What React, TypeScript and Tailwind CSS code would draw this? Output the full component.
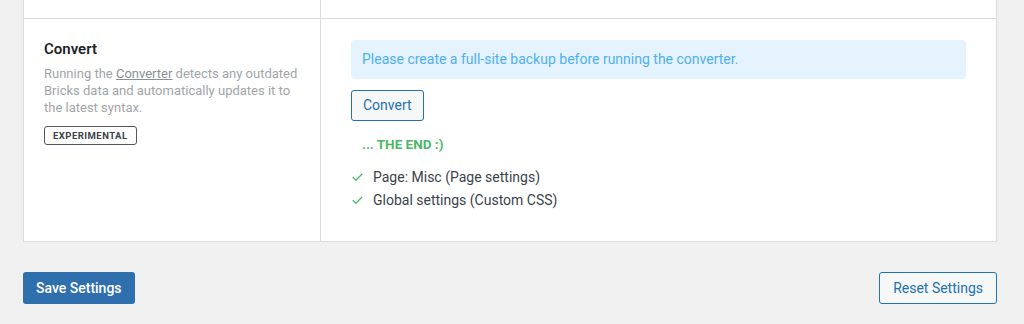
import { Check } from "lucide-react";

const font = { fontFamily: "Roboto, 'Noto Sans', sans-serif" };

export default function App() {
    return (
        <div className="w-[1024px] h-[324px] bg-[#f0f0f1] overflow-hidden pl-[23px] pr-[27px]" style={font}>
            <div className="bg-white border-x border-b border-[#dcdcde]">
                {/* previous row, cut off at the top */}
                <div className="flex h-[19px] border-b border-[#dcdcde]">
                    <div className="w-[297px] border-r border-[#dcdcde]" />
                    <div className="flex-1" />
                </div>

                <div className="flex h-[222px]">
                    <div className="w-[297px] shrink-0 border-r border-[#dcdcde] pl-[20px] pr-[12px] pt-[20px]">
                        <h3 className="text-[15px] leading-[20px] font-semibold text-[#1d2327]">Convert</h3>
                        <p className="mt-[6px] text-[13px] leading-[17px] text-[#a2a5a8]">
                            Running the <span className="underline text-[#8c8f94]">Converter</span> detects any outdated Bricks data and automatically updates it to the latest syntax.
                        </p>
                        <span className="inline-block mt-[10px] px-[8px] h-[19px] leading-[17px] border border-[#50575e] rounded-[3px] text-[9.5px] font-bold tracking-[0.05em] text-[#3c434a]">
                            EXPERIMENTAL
                        </span>
                    </div>

                    <div className="flex-1 pl-[30px] pr-[30px] pt-[21px]">
                        <div className="h-[39px] flex items-center px-[11px] rounded-[4px] bg-[#e5f3ff] text-[14px] text-[#4fb0ef]">
                            Please create a full-site backup before running the converter.
                        </div>
                        <button className="mt-[11px] h-[31px] px-[11px] rounded-[3px] border border-[#2271b1] bg-[#f6f7f7] text-[14px] text-[#2271b1]">
                            Convert
                        </button>
                        <div className="mt-[13px] pl-[11px] text-[13.5px] leading-[20px] font-bold text-[#4ab866]">
                            ... THE END :)
                        </div>
                        <ul className="mt-[13px] flex flex-col gap-[3px] text-[14px] leading-[20px] text-[#3c434a]">
                            <li className="flex items-center gap-[9px]">
                                <Check className="w-[13px] h-[13px] text-[#4ab866]" strokeWidth={2.25} />
                                Page: Misc (Page settings)
                            </li>
                            <li className="flex items-center gap-[9px]">
                                <Check className="w-[13px] h-[13px] text-[#4ab866]" strokeWidth={2.25} />
                                Global settings (Custom CSS)
                            </li>
                        </ul>
                    </div>
                </div>
            </div>

            <div className="flex justify-between mt-[30px]">
                <button className="h-[32px] px-[13px] rounded-[3px] bg-[#2f6fae] text-white text-[14px] font-medium">
                    Save Settings
                </button>
                <button className="h-[32px] px-[13px] rounded-[3px] border border-[#2271b1] bg-[#f6f7f7] text-[#2271b1] text-[14px]">
                    Reset Settings
                </button>
            </div>
        </div>
    );
}
